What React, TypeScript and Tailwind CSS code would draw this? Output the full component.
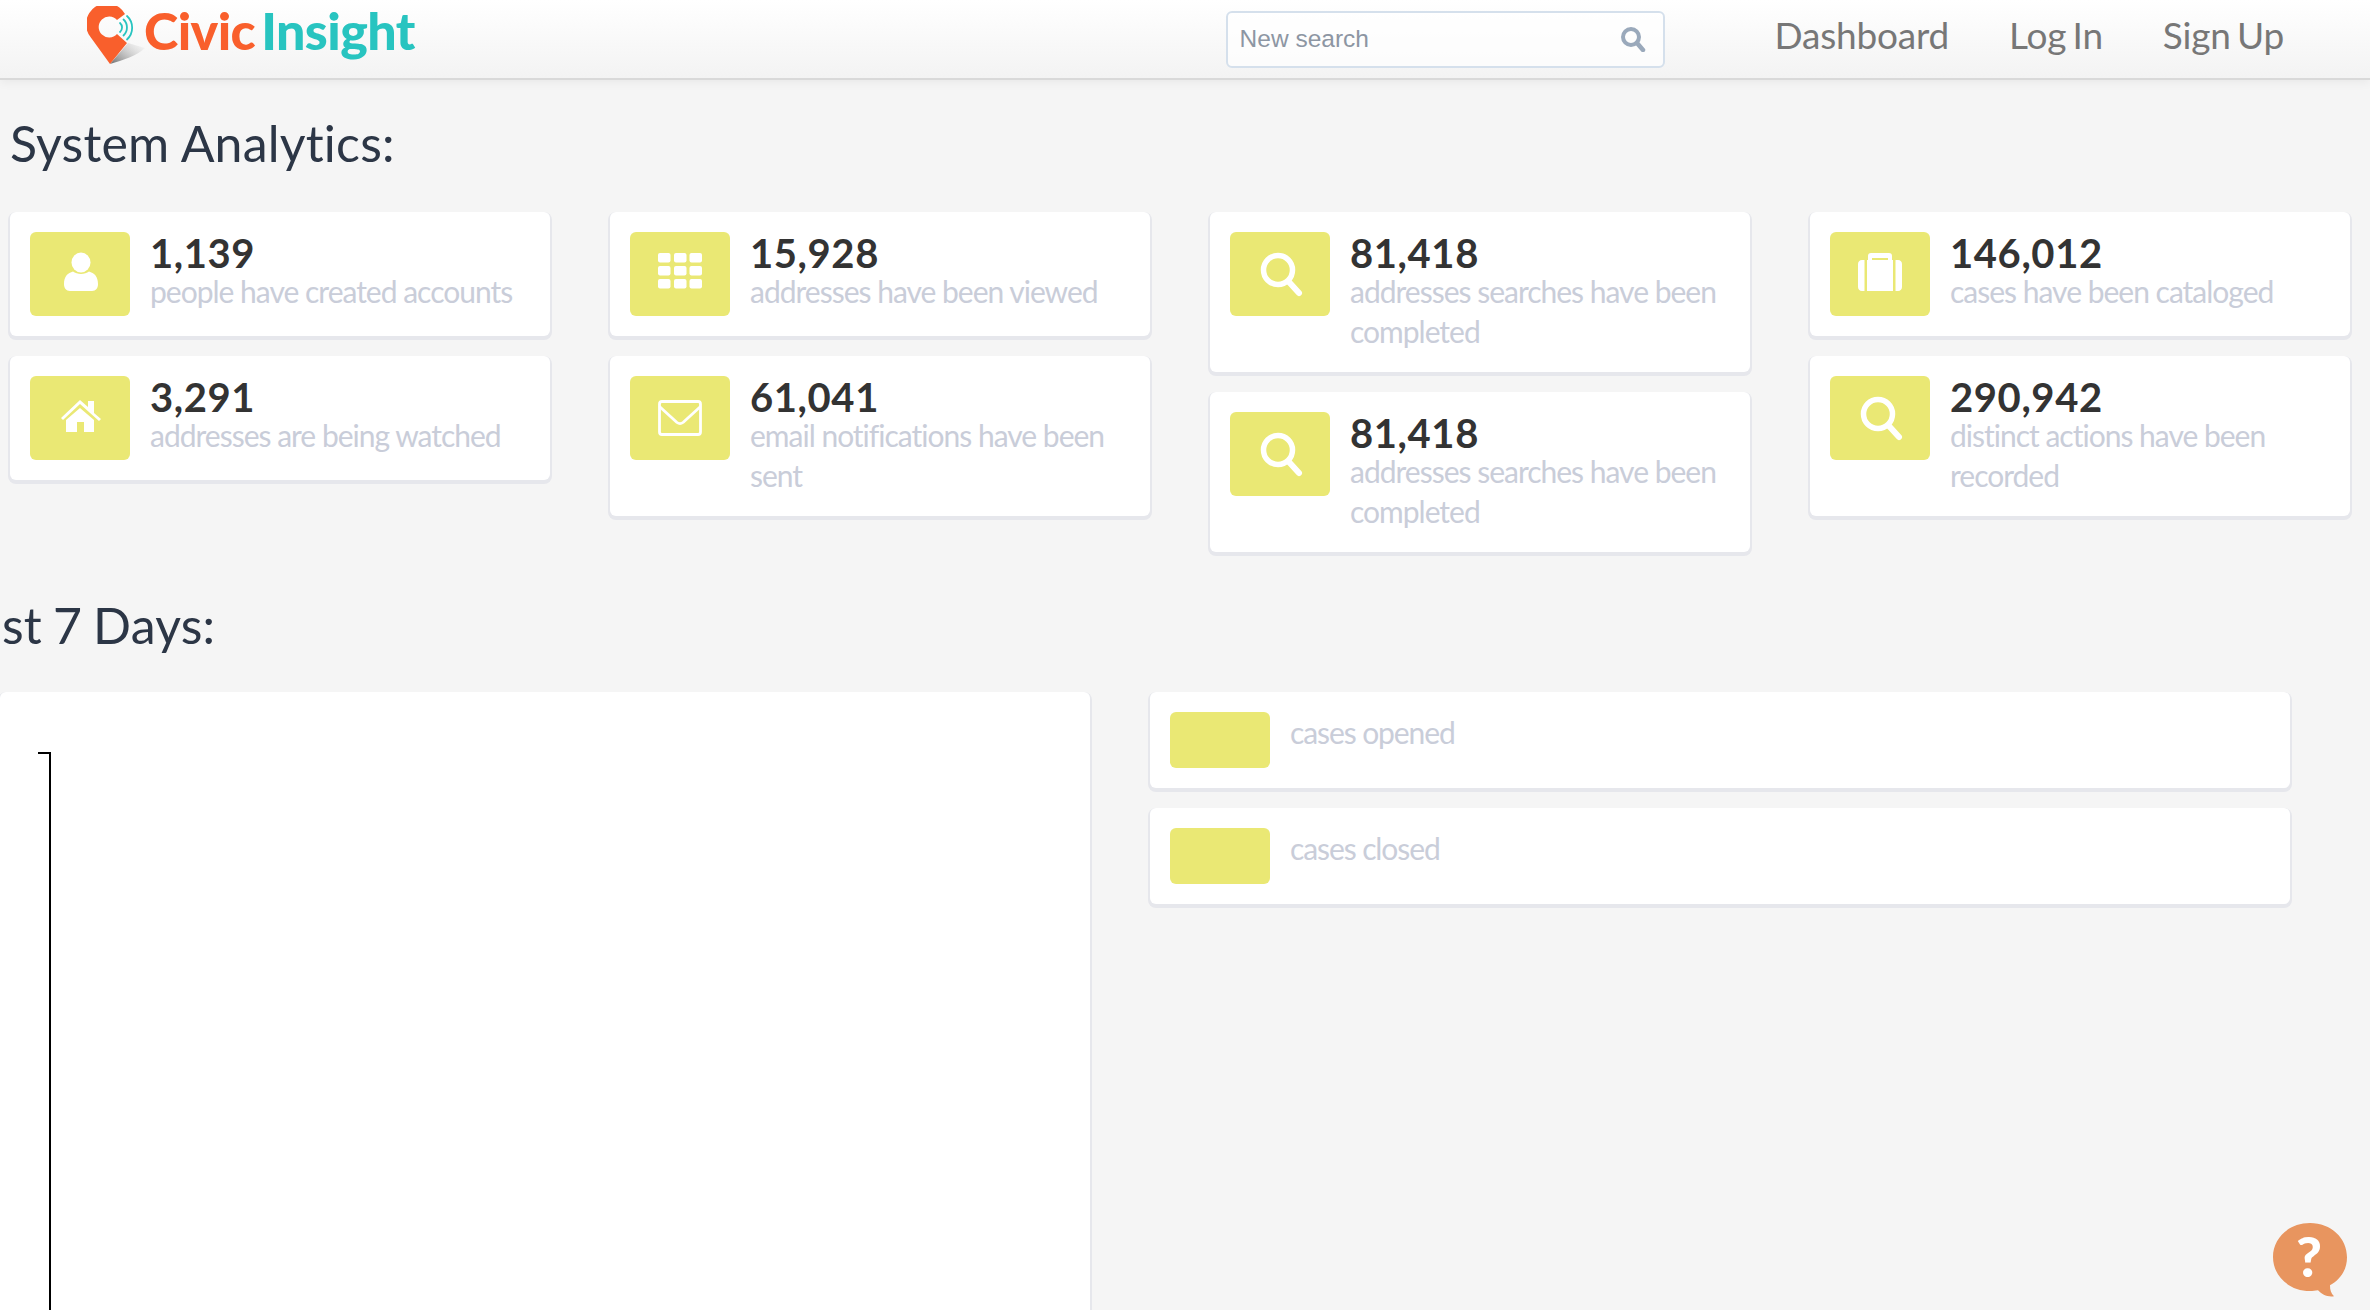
import React from 'react';

type Stat = { value: string; label: string; icon: React.ReactNode };

const UserGlyph = () => (
  <>
    <ellipse cx="51" cy="30.5" rx="9.5" ry="10" fill="white" />
    <path d="M34 52c0-8 4-11 9-12.500 2 1.500 5 2.500 8 2.500s6-1 8-2.500c5 1.500 9 4.500 9 12.500 0 4-2 7-6 7H40c-4 0-6-3-6-7z" fill="white" />
  </>
);

const GridGlyph = () => (
  <g fill="white">
    {[21, 34, 47].map((y) =>
      [28, 44, 59.500].map((x) => <rect key={`${x}-${y}`} x={x} y={y} width="12.500" height="9.500" rx="2" />),
    )}
  </g>
);

const MailGlyph = () => (
  <g fill="none" stroke="white" strokeWidth="2.800" strokeLinejoin="round" strokeLinecap="round">
    <rect x="29.500" y="25.500" width="41" height="33" rx="2.500" />
    <path d="M30 31l17 15.500c2 1.500 4 1.500 6 0l17-15.500" />
  </g>
);

const SearchGlyph = () => (
  <g fill="none" stroke="white" strokeLinecap="round">
    <circle cx="48" cy="38" r="14.500" strokeWidth="5.500" />
    <path d="M59 50l10 11" strokeWidth="6" />
  </g>
);

const CaseGlyph = () => (
  <g fill="white">
    <path d="M41 21h18c2 0 3 1 3 3v5h-4v-3H42v3h-4v-5c0-2 1-3 3-3z" />
    <path d="M37 28h26v31H37z" />
    <path d="M34.500 28v31h-2.500c-2.500 0-4-2-4-4V32c0-2 1.500-4 4-4z" />
    <path d="M65.500 28v31h2.500c2.500 0 4-2 4-4V32c0-2-1.500-4-4-4z" />
  </g>
);

const HomeGlyph = () => (
  <g fill="white">
    <path d="M31 42l19-18 8 7v-6h6v12l7 6-2 2-19-17-17 16z" />
    <path d="M36 44l14-12 14 12v12H54V46h-7v10H36z" />
  </g>
);

const stats: Stat[][] = [
  [
    { value: '1,139', label: 'people have created accounts', icon: <UserGlyph /> },
    { value: '3,291', label: 'addresses are being watched', icon: <HomeGlyph /> },
  ],
  [
    { value: '15,928', label: 'addresses have been viewed', icon: <GridGlyph /> },
    { value: '61,041', label: 'email notifications have been sent', icon: <MailGlyph /> },
  ],
  [
    { value: '81,418', label: 'addresses searches have been completed', icon: <SearchGlyph /> },
    { value: '81,418', label: 'addresses searches have been completed', icon: <SearchGlyph /> },
  ],
  [
    { value: '146,012', label: 'cases have been cataloged', icon: <CaseGlyph /> },
    { value: '290,942', label: 'distinct actions have been recorded', icon: <SearchGlyph /> },
  ],
];

const StatCard: React.FC<{ stat: Stat }> = ({ stat }) => (
  <div className="flex items-start gap-5 rounded-md bg-white p-5 shadow-[0_2px_0_2px_#e6e7ec]">
    <div className="h-[84px] w-[100px] shrink-0 rounded-md bg-[#eae874]">
      <svg viewBox="0 0 100 84" className="h-full w-full">
        {stat.icon}
      </svg>
    </div>
    <div className="min-w-0 pb-px">
      <div className="h-[39px] pt-px text-[40px] leading-[40px] font-bold tracking-[0.6px] text-[#333333]">{stat.value}</div>
      <div className="text-[30px] leading-[40px] tracking-[-1px] text-[#c9cdd9]">{stat.label}</div>
    </div>
  </div>
);

const LegendCard: React.FC<{ label: string }> = ({ label }) => (
  <div className="flex items-start gap-5 rounded-md bg-white p-5 shadow-[0_2px_0_2px_#e6e7ec]">
    <div className="h-14 w-[100px] rounded-md bg-[#eae874]" />
    <div className="text-[30px] leading-[40px] tracking-[-1.100px] text-[#c9cdd9]">{label}</div>
  </div>
);

const PinLogo = () => (
  <svg viewBox="0 0 60 60" className="h-[60px] w-[60px] shrink-0">
    <defs>
      <linearGradient id="pinShadow" x1="0" y1="1" x2="1" y2="0.300">
        <stop offset="0" stopColor="#6b6b6b" />
        <stop offset="1" stopColor="#dddddd" stopOpacity="0.300" />
      </linearGradient>
    </defs>
    <path d="M23 58L41 37 58 42C50 50 36 54 23 58z" fill="url(#pinShadow)" />
    <path d="M38 8A20.800 20.800 0 1 0 3.500 31L23 58 40 37 30 28A10.500 10.500 0 1 1 30 14Z" fill="#f95f2c" />
    <g fill="none" stroke="#28c4c0" strokeWidth="1.800" strokeLinecap="round">
      <path d="M33 17a6 6 0 0 1 0 9" />
      <path d="M36.500 13.500a11 11 0 0 1 0 16" />
      <path d="M40 10a16 16 0 0 1 0 23.500" />
    </g>
  </svg>
);

const Header = () => (
  <header className="relative z-10 flex h-20 items-center border-b-2 border-[#d9d9d9] bg-gradient-to-b from-white to-[#f3f3f3] shadow-[0_2px_10px_rgba(0,0,0,0.06)]">
    <div className="mb-[6px] ml-[87px] flex items-center">
      <PinLogo />
      <div className="mb-[12px] -ml-[3px] text-[52px] leading-none font-black tracking-[-0.6px]">
        <span className="text-[#f95f2c]">Civic</span>
        <span className="ml-[6px] text-[#28c4c0]">Insight</span>
      </div>
    </div>
    <div className="relative ml-auto h-[57px] w-[439px]">
      <input
        placeholder="New search"
        className="h-full w-full rounded-md border-2 border-[#d5e0ec] bg-white/70 pl-3 font-['Liberation_Sans',sans-serif] text-[24.5px] outline-none placeholder:text-[#8d96a3]"
      />
      <svg viewBox="0 0 26 26" className="absolute top-[15px] right-[19px] h-[26px] w-[26px]">
        <circle cx="11" cy="11" r="8" fill="none" stroke="#9aa9bb" strokeWidth="4" />
        <path d="M17 17l6 7" stroke="#9aa9bb" strokeWidth="4.500" strokeLinecap="round" />
      </svg>
    </div>
    <nav className="mr-[86px] mb-[9px] ml-[110px] flex gap-[60px] text-[37px] tracking-[-0.2px] [word-spacing:-3px] text-[#777777]">
      <span>Dashboard</span>
      <span>Log In</span>
      <span>Sign Up</span>
    </nav>
  </header>
);

export default function App() {
  return (
    <div className="relative h-[1310px] overflow-hidden bg-[#f5f5f5] font-['Lato',sans-serif] [font-variant-ligatures:none]">
      <Header />

      <h2 className="mt-[30px] ml-[10px] text-[50px] leading-[66px] tracking-[0.2px] text-[#2c3646]">System Analytics:</h2>

      <div className="mt-9 ml-[10px] grid w-[2340px] grid-cols-4 items-start gap-x-[60px]">
        {stats.map((column, i) => (
          <div key={i} className="flex flex-col gap-5">
            {column.map((stat, j) => (
              <StatCard key={j} stat={stat} />
            ))}
          </div>
        ))}
      </div>

      <h2 className="mt-[40px] -ml-[49px] text-[50px] leading-[66px] tracking-[0.2px] [word-spacing:-2px] text-[#2c3646]">Last 7 Days:</h2>

      <div className="mt-[34px] flex gap-[60px]">
        <div className="h-[800px] w-[1090px] rounded-md bg-white pt-[60px] pl-[38px] shadow-[0_2px_0_2px_#e6e7ec]">
          <svg className="h-[560px] w-[14px]" viewBox="0 0 14 560">
            <path d="M0 1H12V560" fill="none" stroke="#000000" strokeWidth="2" />
          </svg>
        </div>
        <div className="flex w-[1140px] flex-col gap-5">
          <LegendCard label="cases opened" />
          <LegendCard label="cases closed" />
        </div>
      </div>

      <svg viewBox="0 0 80 80" className="absolute right-[20px] bottom-[10px] h-[80px] w-[80px]">
        <path d="M40 3C19 3 3 18 3 37s16 34 37 34c3 0 5-.300 8-.800 4 4 9 7 16 6-3-3-4-6-4-11 11-6 17-16 17-28C77 18 61 3 40 3z" fill="#e8955f" />
        <text x="39" y="57" textAnchor="middle" fontSize="56" fontWeight="900" fill="white">?</text>
      </svg>
    </div>
  );
}
